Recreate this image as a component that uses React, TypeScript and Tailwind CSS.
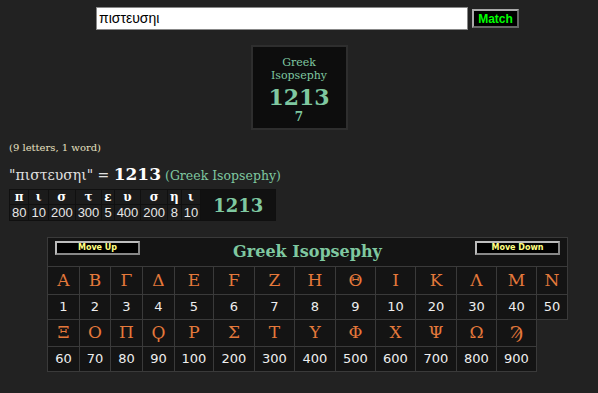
import React from "react";

const serif = "font-['DejaVu_Serif','Liberation_Serif',serif]";
const sans = "font-['DejaVu_Sans','Liberation_Sans',sans-serif]";
const arial = "font-['Liberation_Sans',Arial,sans-serif]";

const breakdown: [string, number][] = [
  ["π", 80],
  ["ι", 10],
  ["σ", 200],
  ["τ", 300],
  ["ε", 5],
  ["υ", 400],
  ["σ", 200],
  ["η", 8],
  ["ι", 10],
];

const colWidths = [32, 31, 32, 32, 39, 41, 40, 41, 40, 40, 41, 40, 40, 31];

const rowA: [string, number][] = [
  ["Α", 1],
  ["Β", 2],
  ["Γ", 3],
  ["Δ", 4],
  ["Ε", 5],
  ["Ϝ", 6],
  ["Ζ", 7],
  ["Η", 8],
  ["Θ", 9],
  ["Ι", 10],
  ["Κ", 20],
  ["Λ", 30],
  ["Μ", 40],
  ["Ν", 50],
];

const rowB: [string, number][] = [
  ["Ξ", 60],
  ["Ο", 70],
  ["Π", 80],
  ["Ϙ", 90],
  ["Ρ", 100],
  ["Σ", 200],
  ["Τ", 300],
  ["Υ", 400],
  ["Φ", 500],
  ["Χ", 600],
  ["Ψ", 700],
  ["Ω", 800],
  ["Ϡ", 900],
];

const cell = "flex items-center justify-center border-r border-b border-[#3a3a3a] bg-[#141414]";
const moveBtn = `self-start mt-[3px] w-[85px] h-[14px] bg-black border-2 border-[#bbb] border-b-[#888] border-r-[#888] text-[#ffff80] text-[8px] font-bold leading-none ${sans}`;

export default function App() {
  return (
    <div className="w-[598px] h-[393px] bg-[#222222] overflow-hidden">
      {/* search */}
      <div className="flex items-center gap-[4px] pl-[96px] pt-[7px]">
        <div className={`w-[372px] h-[23px] bg-white border border-[#888] flex items-center pl-[2px] text-[14px] text-black ${arial}`}>
          πιστευσηι
        </div>
        <button
          className={`w-[47px] h-[19px] bg-black border-2 border-[#aaa] border-b-[#666] border-r-[#666] text-[#00ff00] text-[12px] font-bold leading-none ${arial}`}
        >
          Match
        </button>
      </div>

      {/* result box */}
      <div className={`mx-auto mt-[15px] w-[97px] h-[85px] bg-[#0d0d0d] border-2 border-[#2e2e2e] flex flex-col items-center pt-[9px] text-[#7fc8a0] ${serif}`}>
        <div className="text-[11px] leading-[13px] text-center">
          Greek
          <br />
          Isopsephy
        </div>
        <div className="text-[22px] font-bold leading-[26px] mt-[2px]">1213</div>
        <div className="text-[12px] font-bold leading-[14px]">7</div>
      </div>

      {/* summary */}
      <div className={`pl-[9px] mt-[12px] ${serif}`}>
        <div className="text-[10px] leading-[12px] text-[#e6e0c0]">(9 letters, 1 word)</div>
        <div className="mt-[10px] h-[20px] flex items-baseline whitespace-nowrap leading-[20px]">
          <span className="text-[14px] text-[#e0e0e0]">"πιστευσηι" =&nbsp;</span>
          <span className="text-[17px] font-bold text-white">1213</span>
          <span className="text-[12.5px] text-[#7fc8a0]">&nbsp;(Greek Isopsephy)</span>
        </div>
        <div className="mt-[5px] flex w-fit bg-[#101010] p-[1px] gap-[1px]">
          {breakdown.map(([l, n], i) => (
            <div key={i} className="flex flex-col gap-[1px]">
              <div className="h-[14px] bg-[#1b1b1b] flex items-center justify-center text-[12px] font-bold text-white px-[2px]">
                {l}
              </div>
              <div className={`h-[15px] bg-[#1b1b1b] flex items-center justify-center text-[13px] text-[#e8e8e8] px-[2px] ${arial}`}>
                {n}
              </div>
            </div>
          ))}
          <div className="w-[74px] bg-[#111] flex items-center justify-center text-[18px] font-bold text-[#7fc8a0]">
            1213
          </div>
        </div>
      </div>

      {/* alphabet table */}
      <div
        className="ml-[47px] mt-[16px] grid border-l border-t border-[#3a3a3a] w-[521px]"
        style={{ gridTemplateColumns: colWidths.map((w) => `${w}px`).join(" ") }}
      >
        <div className="col-span-full h-[29px] flex items-center justify-between px-[7px] border-r border-b border-[#3a3a3a] bg-[#141414]">
          <button className={moveBtn}>Move Up</button>
          <span className={`text-[16px] font-bold text-[#7fc8a0] ${serif}`}>Greek Isopsephy</span>
          <button className={moveBtn}>Move Down</button>
        </div>
        {rowA.map(([l], i) => (
          <div key={"a" + i} className={`${cell} h-[28px] text-[17px] text-[#e5793b] ${serif}`}>
            {l}
          </div>
        ))}
        {rowA.map(([, n], i) => (
          <div key={"an" + i} className={`${cell} h-[25px] text-[13px] text-[#eeeeee] ${sans}`}>
            {n}
          </div>
        ))}
        {rowB.map(([l], i) => (
          <div key={"b" + i} className={`${cell} h-[27px] text-[17px] text-[#e5793b] ${serif}`}>
            {l}
          </div>
        ))}
        <div />
        {rowB.map(([, n], i) => (
          <div key={"bn" + i} className={`${cell} h-[25px] text-[13px] text-[#eeeeee] ${sans}`}>
            {n}
          </div>
        ))}
      </div>
    </div>
  );
}
